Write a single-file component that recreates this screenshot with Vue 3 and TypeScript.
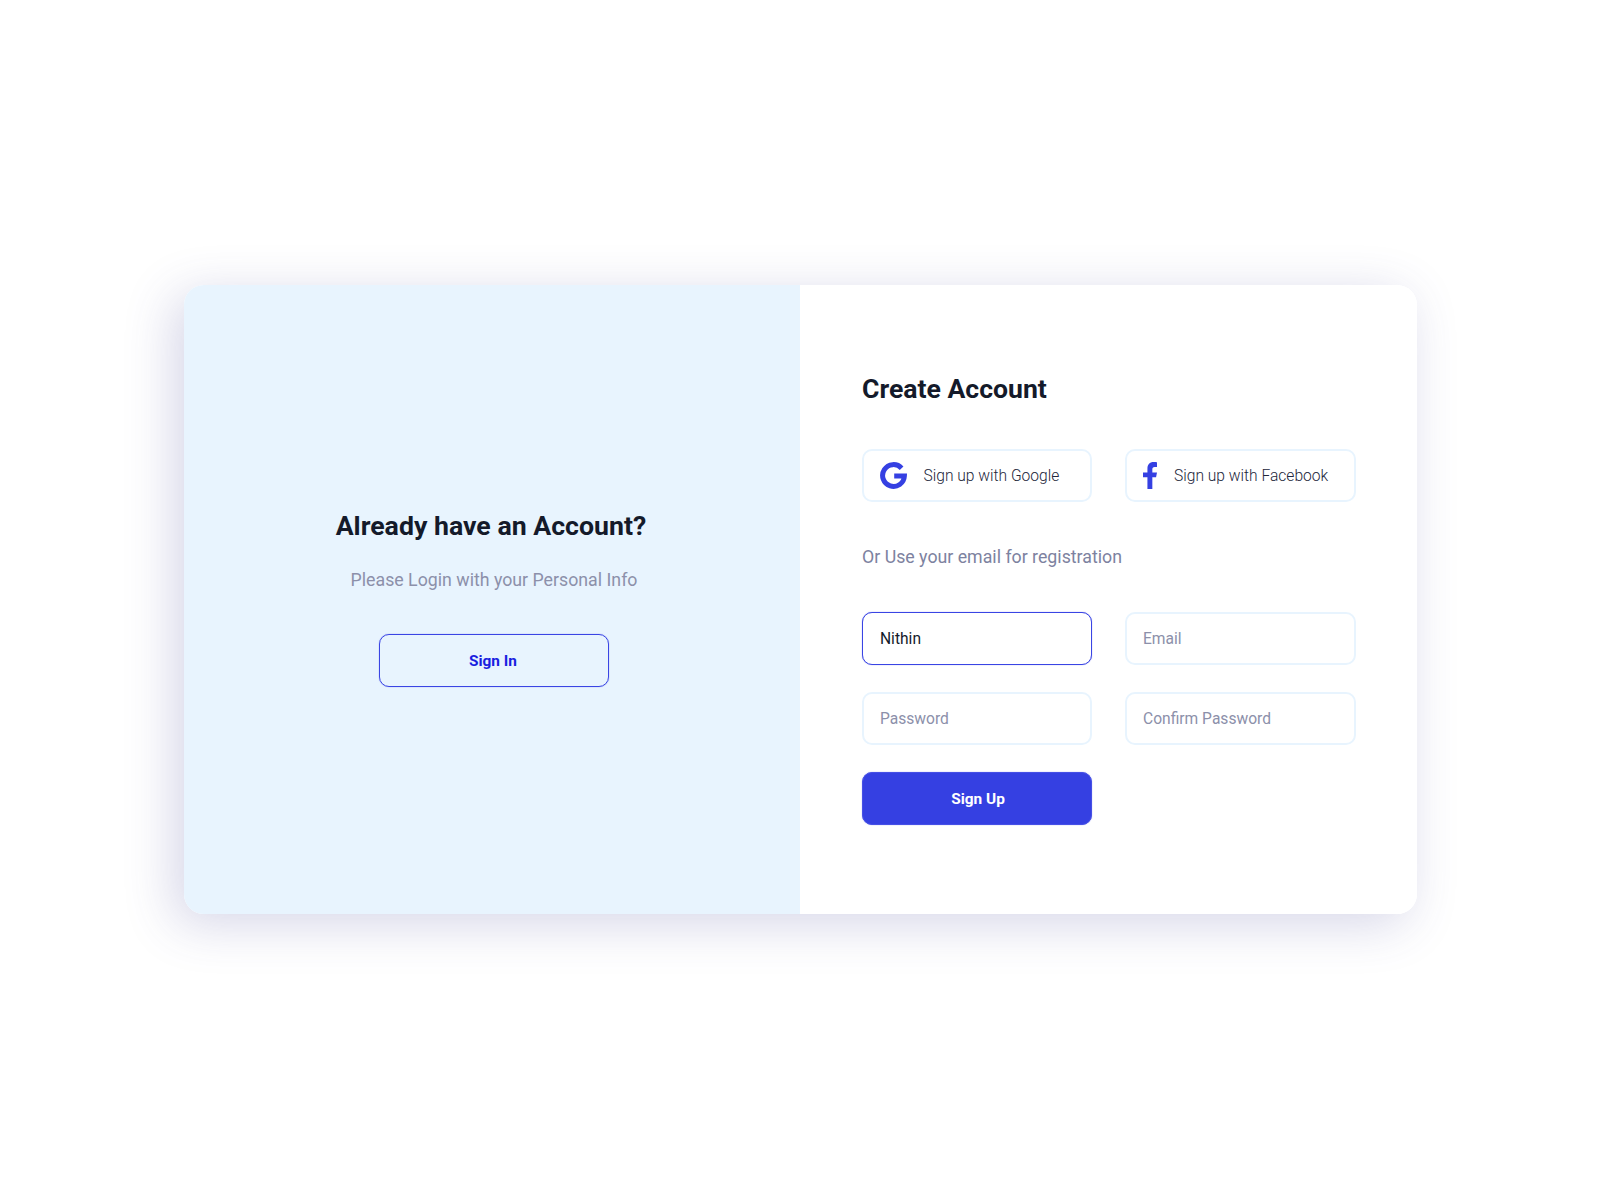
<script setup lang="ts">
const facebookPath = 'M14 13.5h3.2l.8-4H14V7c0-1.1.4-2 2.1-2H18V1.2C17.6 1.1 16.3 1 15 1c-3.2 0-5.2 1.9-5.2 5.4v3.1H6v4h3.8V23H14z'
</script>

<template>
  <main class="page">
    <section class="card">
      <div class="side">
        <h2 class="side-title">Already have an Account?</h2>
        <p class="side-text">Please Login with your Personal Info</p>
        <button class="btn outline" type="button">Sign In</button>
      </div>
      <div class="form">
        <h1 class="form-title">Create Account</h1>
        <div class="grid social">
          <button class="field social-btn google" type="button">
            <svg class="icon-g" viewBox="0 0 27 27" aria-hidden="true">
              <path d="M21.6 6.2A10.9 10.9 0 1 0 24.4 14H14.2" />
            </svg>
            <span>Sign up with Google</span>
          </button>
          <button class="field social-btn facebook" type="button">
            <svg class="icon-f" viewBox="6 1 12 22" preserveAspectRatio="none" aria-hidden="true"><path :d="facebookPath" /></svg>
            <span>Sign up with Facebook</span>
          </button>
        </div>
        <p class="hint">Or Use your email for registration</p>
        <div class="grid">
          <input class="field input active" type="text" value="Nithin" />
          <input class="field input" type="email" placeholder="Email" />
          <input class="field input" type="password" placeholder="Password" />
          <input class="field input" type="password" placeholder="Confirm Password" />
          <button class="btn solid" type="button">Sign Up</button>
        </div>
      </div>
    </section>
  </main>
</template>

<style scoped>
.page {
  display: flex;
  align-items: center;
  justify-content: center;
  width: 1600px;
  height: 1200px;
  background: #fff;
  font-family: Roboto, "Liberation Sans", sans-serif;
}
.card {
  display: grid;
  grid-template-columns: 616px 617px;
  width: 1233px;
  height: 629px;
  margin: -1px 0 0 1px;
  border-radius: 20px;
  background: #fff;
  box-shadow: -10px 10px 50px rgba(70, 70, 150, 0.22);
}
.side {
  display: flex;
  flex-direction: column;
  align-items: center;
  justify-content: center;
  padding: 0 0 4px 4px;
  border-radius: 20px 0 0 20px;
  background: #e8f4fe;
}
.side-title {
  margin: 0 6px 0 0;
  color: #141a2a;
  font-size: 26.7px;
  font-weight: 700;
  line-height: 36px;
}
.side-text {
  margin: 24px 0 42px;
  color: #8c90aa;
  font-size: 17.75px;
  line-height: 24px;
}
.form {
  padding: 88px 60px 0 62px;
  border-radius: 0 20px 20px 0;
  background: #fff;
}
.form-title {
  margin: 0 0 44px;
  color: #141a2a;
  font-size: 26.6px;
  font-weight: 700;
  line-height: 32px;
}
.grid {
  display: grid;
  grid-template-columns: 230px 231px;
  column-gap: 33px;
  row-gap: 27px;
}
.field {
  box-sizing: border-box;
  width: 100%;
  height: 53px;
  border: 2px solid #e8f4fe;
  border-radius: 10px;
  background: #fff;
  font-family: inherit;
}
.social-btn {
  display: flex;
  align-items: center;
  color: #22263a;
  font-size: 15.6px;
  font-weight: 300;
}
.google { gap: 17px; padding: 0 0 0 15.5px; }
.facebook { gap: 17px; padding: 0 0 0 16px; }
.icon-g {
  flex: none;
  width: 27px;
  height: 27px;
  fill: none;
  stroke: #3540e2;
  stroke-width: 5;
}
.icon-f {
  flex: none;
  width: 14px;
  height: 27px;
  fill: #3540e2;
}
.hint {
  margin: 43px 0;
  color: #7d82a0;
  font-size: 17.75px;
  line-height: 24px;
}
.input {
  padding: 1px 16px 0;
  color: #141a2a;
  font-size: 15.6px;
  outline: none;
}
.input::placeholder {
  color: #8c90aa;
  opacity: 1;
}
.active {
  padding: 1px 17px 0;
  border: 1px solid #3a45e4;
  box-shadow: 0 0 1px rgba(58, 69, 228, 0.7);
}
.btn {
  box-sizing: border-box;
  width: 230px;
  height: 53px;
  border-radius: 10px;
  font-family: inherit;
  font-size: 15.4px;
  font-weight: 700;
}
.outline {
  padding: 0 2px 0 0;
  border: 1px solid #3a45e4;
  background: transparent;
  color: #1a1fe0;
  box-shadow: 0 0 1px rgba(58, 69, 228, 0.7);
}
.solid {
  padding: 0 0 0 2px;
  border: 1px solid #4650e6;
  background: #3540e2;
  color: #fff;
  box-shadow: 0 0 1px rgba(58, 69, 228, 0.7);
}
</style>
